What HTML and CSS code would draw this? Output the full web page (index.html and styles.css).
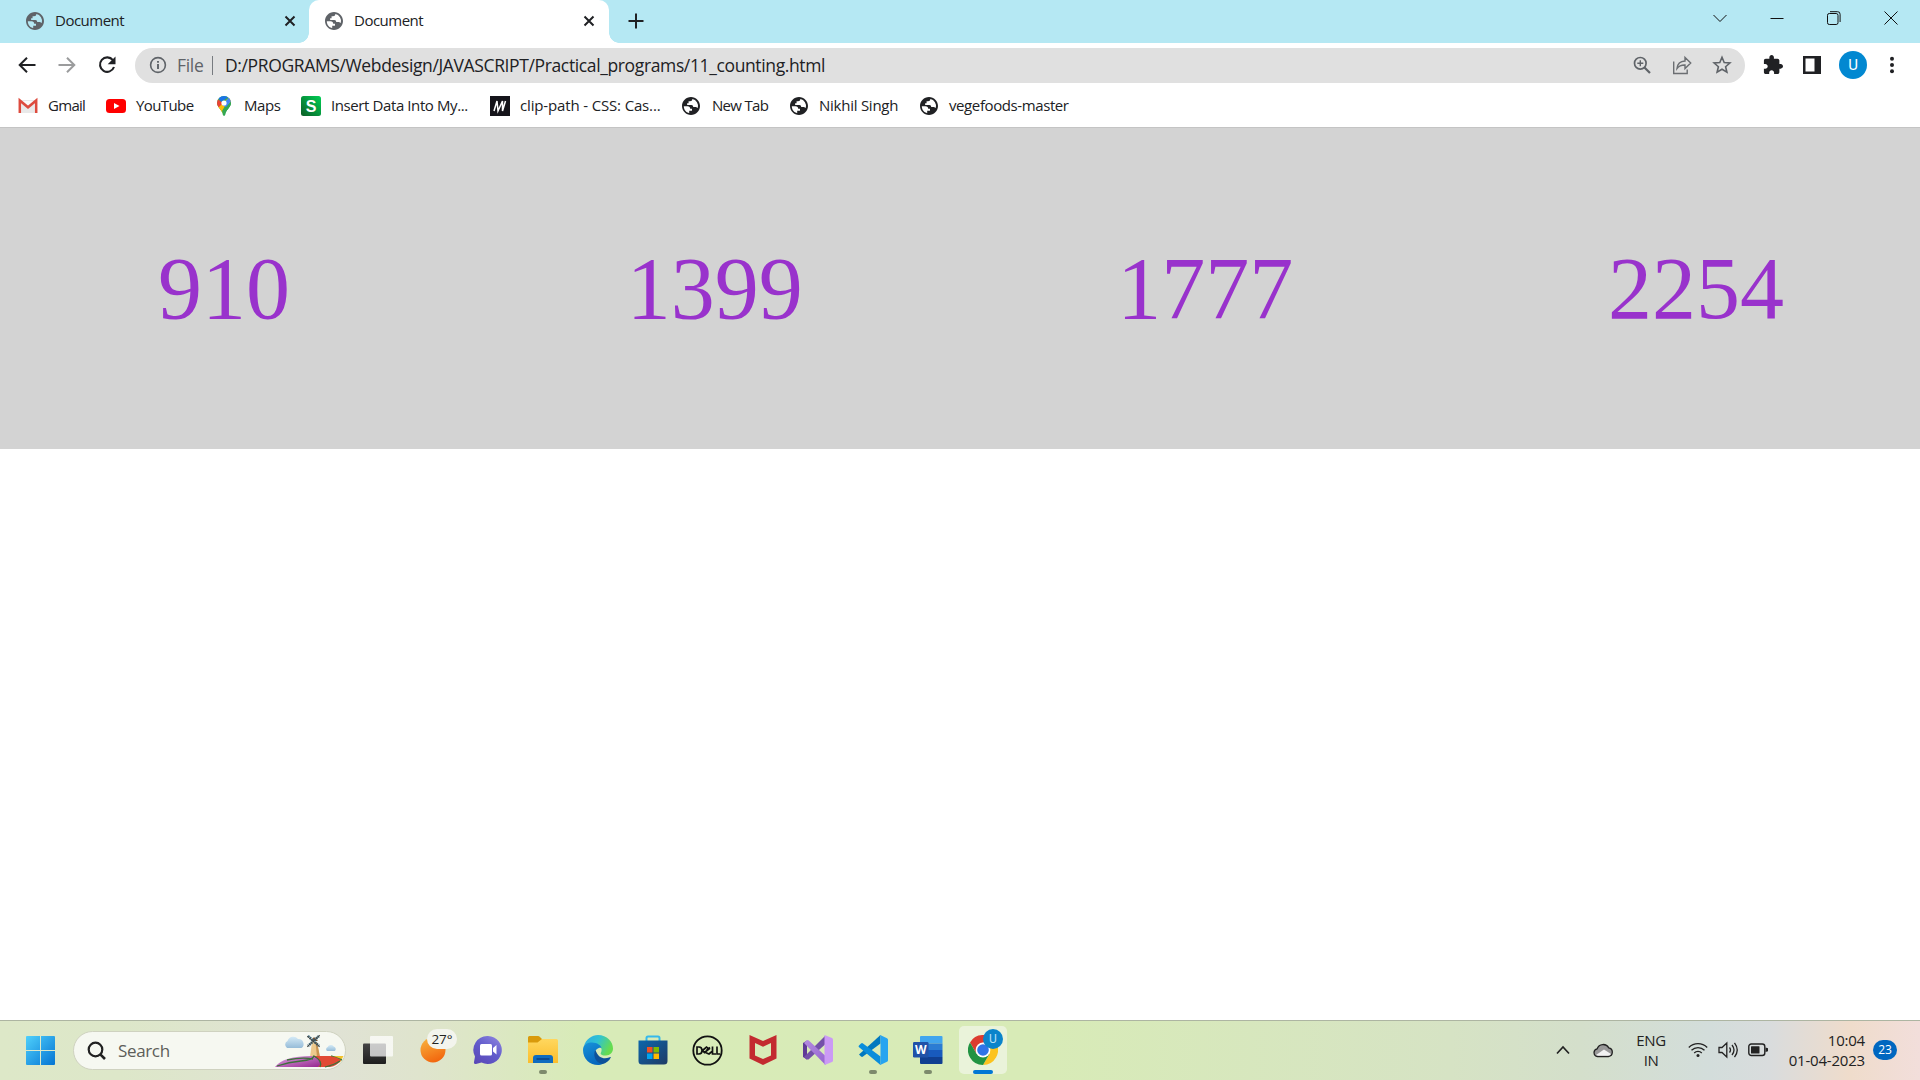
FILE: index.html
```html
<!DOCTYPE html>
<html lang="en">
<head>
<meta charset="utf-8">
<title>Document</title>
<link rel="stylesheet" href="styles.css">
</head>
<body>
<svg width="0" height="0" class="defs" aria-hidden="true">
  <defs>
    <symbol id="globe" viewBox="2 2 20 20"><path d="M12 2C6.48 2 2 6.48 2 12s4.48 10 10 10 10-4.48 10-10S17.52 2 12 2zM4 12.2h4.2c1.9 0 2.9 1 2.9 2.9h2v2.1h-3.1v2.6C6.700 19.300 4.100 16.200 4 12.200zM13.500 4.200c-.1 1.700-.9 2.500-2.600 2.500H9.300v2.200H7.700v2h4.700c1.300 0 2 .8 2 2.100h2.200c1.300 0 1.800.8 3 .9A8 8 0 0 0 13.500 4.200z" fill-rule="evenodd"/></symbol>
    <symbol id="x" viewBox="0 0 12 12"><path d="M1.500 1.500l9 9M10.500 1.500l-9 9" stroke="#202124" stroke-width="2"/></symbol>
    <linearGradient id="win" x1="0" y1="0" x2="1" y2="1"><stop offset="0" stop-color="#4fd0fb"/><stop offset="1" stop-color="#0474d3"/></linearGradient>
    <linearGradient id="sun" x1=".2" y1="0" x2=".6" y2="1"><stop offset="0" stop-color="#f8b13c"/><stop offset="1" stop-color="#f2650d"/></linearGradient>
    <linearGradient id="chat" x1=".9" y1="0" x2=".2" y2="1"><stop offset="0" stop-color="#8f86df"/><stop offset=".5" stop-color="#625ccc"/><stop offset="1" stop-color="#5a48b8"/></linearGradient>
    <linearGradient id="fold" x1="0" y1="0" x2="0" y2="1"><stop offset="0" stop-color="#ffd75e"/><stop offset="1" stop-color="#fbbd2c"/></linearGradient>
    <linearGradient id="edge1" x1="0" y1="0" x2="1" y2=".4"><stop offset="0" stop-color="#2aa9e6"/><stop offset=".5" stop-color="#2fc2d3"/><stop offset="1" stop-color="#66dc4f"/></linearGradient>
    <linearGradient id="edge2" x1="0" y1="0" x2=".4" y2="1"><stop offset="0" stop-color="#1793da"/><stop offset="1" stop-color="#0667bd"/></linearGradient>
    <linearGradient id="store" x1="0" y1="0" x2="1" y2="1"><stop offset="0" stop-color="#0d66ab"/><stop offset="1" stop-color="#1f3b66"/></linearGradient>
    <linearGradient id="vs" x1="0" y1="0" x2="1" y2="1"><stop offset="0" stop-color="#b48be0"/><stop offset="1" stop-color="#9565cf"/></linearGradient>
    <linearGradient id="tv" x1="0" y1="0" x2="0" y2="1"><stop offset="0" stop-color="#444"/><stop offset="1" stop-color="#1e1e1e"/></linearGradient>
    <linearGradient id="purple" x1="0" y1="0" x2="1" y2="1"><stop offset="0" stop-color="#dca5e4"/><stop offset="1" stop-color="#96258e"/></linearGradient>
    <linearGradient id="sg" x1="1" y1="0" x2="0" y2="1"><stop offset="0" stop-color="#00cf55"/><stop offset="1" stop-color="#0b5c25"/></linearGradient>
    <linearGradient id="cloudg" x1="0" y1="0" x2="0" y2="1"><stop offset="0" stop-color="#d4eaf6"/><stop offset="1" stop-color="#96bcd8"/></linearGradient>
  </defs>
</svg>

<div class="window">
  <header class="tabstrip">
    <div class="tab">
      <svg class="favicon" width="18" height="18"><use href="#globe"/></svg>
      <span class="tab-title">Document</span>
      <svg class="close" width="12" height="12"><use href="#x"/></svg>
    </div>
    <div class="tab active">
      <svg class="favicon" width="18" height="18"><use href="#globe"/></svg>
      <span class="tab-title">Document</span>
      <svg class="close" width="12" height="12"><use href="#x"/></svg>
    </div>
    <svg class="newtab" width="16" height="16" viewBox="0 0 16 16"><path d="M8 .5v15M.5 8h15" stroke="#202124" stroke-width="2"/></svg>
    <div class="captions">
      <svg width="14" height="14" viewBox="0 0 14 14"><path d="M.5 4L7 10.500 13.500 4"/></svg>
      <svg width="14" height="14" viewBox="0 0 14 14"><path d="M.5 7.500h13"/></svg>
      <svg width="14" height="14" viewBox="0 0 14 14"><rect x=".5" y="2.500" width="10.500" height="11" rx="1.800"/><path d="M3 .7h7.500a2.500 2.500 0 0 1 2.600 2.600V11"/></svg>
      <svg width="14" height="14" viewBox="0 0 14 14"><path d="M.5.5l13 13M13.500.5l-13 13"/></svg>
    </div>
  </header>

  <div class="toolbar">
    <div class="nav">
      <svg width="20" height="20" viewBox="0 0 20 20"><path d="M18.500 10H3M10 2.700L2.700 10l7.300 7.300" fill="none" stroke="#202124" stroke-width="2"/></svg>
      <svg width="20" height="20" viewBox="0 0 20 20"><path d="M1.500 10H17M10 2.700l7.300 7.300-7.300 7.300" fill="none" stroke="#9b9c9d" stroke-width="2"/></svg>
      <svg width="20" height="20" viewBox="0 0 20 20"><path d="M15.900 5.200A7.200 7.200 0 1 0 17 12" fill="none" stroke="#202124" stroke-width="2.100"/><path d="M18.500 1.500v7.800h-7.800z" fill="#202124"/></svg>
    </div>
    <div class="omnibox">
      <svg class="info" width="18" height="18" viewBox="0 0 18 18"><circle cx="9" cy="9" r="7.400" fill="none" stroke="#5f6368" stroke-width="1.600"/><path d="M9 8v5M9 4.900v1.900" stroke="#5f6368" stroke-width="1.900"/></svg>
      <span class="scheme">File</span>
      <span class="divider"></span>
      <span class="url">D:/PROGRAMS/Webdesign/JAVASCRIPT/Practical_programs/11_counting.html</span>
      <div class="omni-actions">
        <svg width="20" height="20" viewBox="0 0 20 20" fill="none" stroke="#5f6368" stroke-width="1.700"><circle cx="8.300" cy="8.300" r="5.800"/><path d="M12.500 12.500l5.500 5.500" stroke-width="2.200"/><path d="M8.300 5.300v6M5.300 8.300h6" stroke-width="1.400"/></svg>
        <svg width="20" height="20" viewBox="0 0 20 20" fill="none" stroke="#6b6e72" stroke-width="1.400"><path d="M1.700 6.500v12h13.500v-4"/><path d="M5 13.500c.5-5 3.500-7.300 8-7.500V2.500l5.700 5.500L13 13.500V10c-3.500-.1-6 .8-8 3.500z"/></svg>
        <svg width="20" height="20" viewBox="0 0 20 20" fill="none" stroke="#5f6368" stroke-width="1.600"><path d="M10 2.300l2.200 5.200 5.700.5-4.300 3.700 1.300 5.500L10 14.300l-4.900 2.900 1.300-5.500L2.100 8l5.700-.5z"/></svg>
      </div>
    </div>
    <div class="actions">
      <svg width="20" height="20" viewBox="1 1 22 22"><path fill="#202124" d="M20.500 11H19V7c0-1.100-.9-2-2-2h-4V3.500C13 2.120 11.880 1 10.500 1S8 2.120 8 3.500V5H4c-1.100 0-1.990.9-1.990 2v3.800H3.500c1.490 0 2.700 1.210 2.700 2.700s-1.210 2.700-2.700 2.700H2V20c0 1.100.9 2 2 2h3.800v-1.500c0-1.490 1.210-2.700 2.700-2.700 1.490 0 2.700 1.210 2.700 2.700V22H17c1.100 0 2-.9 2-2v-4h1.500c1.380 0 2.500-1.120 2.500-2.500S21.880 11 20.500 11z"/></svg>
      <svg width="18" height="18" viewBox="0 0 18 18"><path fill="#202124" fill-rule="evenodd" d="M0 0h18v18H0zM2.500 2.500v13h9v-13z"/></svg>
      <span class="avatar">U</span>
      <svg width="6" height="18" viewBox="0 0 6 18" fill="#202124"><circle cx="3" cy="2.800" r="2"/><circle cx="3" cy="9" r="2"/><circle cx="3" cy="15.200" r="2"/></svg>
    </div>
  </div>

  <nav class="bookmarks">
    <a class="bm gmail"><svg width="20" height="20" viewBox="0 0 20 20"><path fill="#e9e9e9" d="M1 4h18v13H1z"/><path fill="#fafafa" d="M4 5h12l-6 6z"/><path fill="none" stroke="#dd4b3e" stroke-width="2.500" d="M1.800 17V4.500L10 11.300l8.200-6.800V17"/></svg><span>Gmail</span></a>
    <a class="bm youtube"><svg width="20" height="20" viewBox="0 0 20 20"><rect y="3" width="20" height="14" rx="3.500" fill="#f00"/><path fill="#fff" d="M8 7l5.500 3L8 13z"/></svg><span>YouTube</span></a>
    <a class="bm maps"><svg width="20" height="20" viewBox="0 0 20 20"><clipPath id="pin"><path d="M10 0a7 7 0 0 0-7 7c0 4.600 5.300 6.500 5.900 12 .1 1 2.100 1 2.200 0C11.700 13.500 17 11.600 17 7a7 7 0 0 0-7-7z"/></clipPath><g clip-path="url(#pin)"><path fill="#34a853" d="M0 0h20v20H0z"/><path fill="#fbbc04" d="M0 14L17 0v6L8 17z"/><path fill="#34a853" d="M11 10l7-5v8l-8 7-2-5z"/><path fill="#4285f4" d="M8 9L18 -2v6L12 11z"/><path fill="#1a73e8" d="M3 0h13L7 6z"/><path fill="#ea4335" d="M2 2l7 5-5 5H0z"/></g><circle cx="10" cy="7" r="2.600" fill="#fff"/></svg><span>Maps</span></a>
    <a class="bm insert"><svg width="20" height="20" viewBox="0 0 20 20"><rect width="20" height="20" rx="2.500" fill="url(#sg)"/><text x="10" y="15.800" text-anchor="middle" class="s-letter">S</text></svg><span>Insert Data Into My...</span></a>
    <a class="bm clip"><svg width="20" height="20" viewBox="0 0 20 20"><path fill="#15141a" d="M0 0h20v20H0z"/><path d="M4 15L7 5l1 10 4.500-10v10L15.500 5" fill="none" stroke="#fff" stroke-width="1.500"/></svg><span>clip-path - CSS: Cas...</span></a>
    <a class="bm newt"><svg width="18" height="18"><use href="#globe"/></svg><span>New Tab</span></a>
    <a class="bm nikhil"><svg width="18" height="18"><use href="#globe"/></svg><span>Nikhil Singh</span></a>
    <a class="bm vege"><svg width="18" height="18"><use href="#globe"/></svg><span>vegefoods-master</span></a>
  </nav>

  <main class="page">
    <section class="counters">
      <div class="count">910</div>
      <div class="count">1399</div>
      <div class="count">1777</div>
      <div class="count">2254</div>
    </section>
  </main>

  <footer class="taskbar">
    <svg class="start" width="29" height="29" viewBox="0 0 29 29"><path fill="url(#win)" d="M0 1a1 1 0 0 1 1-1h13v14H0zM15 0h13a1 1 0 0 1 1 1v13H15zM0 15h14v14H1a1 1 0 0 1-1-1zM15 15h14v13a1 1 0 0 1-1 1H15z"/></svg>
    <div class="search">
      <svg width="20" height="20" viewBox="0 0 20 20"><circle cx="8.500" cy="8.500" r="6.800" fill="none" stroke="#222" stroke-width="2.200"/><path d="M13.300 13.300l4.700 4.700" stroke="#222" stroke-width="2.600"/></svg>
      <span>Search</span>
      <svg class="mill" width="72" height="36" viewBox="0 0 72 36">
        <path fill="url(#cloudg)" d="M12 15a4 4 0 0 1 .5-7 6 6 0 0 1 10.500-2 5 5 0 0 1 3.500 9z"/>
        <path fill="url(#cloudg)" d="M52 18a2.300 2.300 0 0 1 .7-4 3.500 3.500 0 0 1 6-.5 2.500 2.500 0 0 1 1 4.500z"/>
        <path fill="#edc98d" d="M37 9h5l3 15H35z"/><path fill="#c99450" d="M40.500 9H42l3 15h-3z"/><path fill="#7b4a25" d="M36 8l3-4 4 4z"/>
        <path stroke="#3c6478" stroke-width="2.600" stroke-dasharray="1.700 .6" d="M33 3l11 10M44 3L33 13"/><path stroke="#483b30" stroke-width=".8" d="M32 3l13 11M45 2L32 14"/>
        <path fill="#f3c22c" d="M50 23h18.500l-3.500 6.500L50 27z"/>
        <path stroke="#398238" stroke-width="1.500" d="M56 23l11 4"/>
        <path fill="#e14a34" d="M38 34l2-11h15q7 1 11 4-4 6-11 7z"/>
        <path fill="url(#purple)" d="M0 34q8-11 37-11 13 5 6 11z"/>
        <path d="M2 33q12-4 24-5t13-5q9 5 6 11M12 27q15-3 26-1" fill="none" stroke="#3d713b" stroke-width="1.300"/>
        <path d="M50 34q9-2 15-6" fill="none" stroke="#3d713b" stroke-width="1.200"/>
      </svg>
    </div>
    <div class="apps">
      <div class="app"><svg width="30" height="30" viewBox="0 0 30 30"><rect y="8.500" width="23" height="20.500" rx="1" fill="url(#tv)"/><rect x="7" y="1" width="23" height="20.500" rx="1" fill="#fff" fill-opacity=".72"/></svg></div>
      <div class="app weather"><svg width="26" height="26" viewBox="0 0 26 26"><circle cx="13" cy="13" r="12.500" fill="url(#sun)"/></svg><span class="temp">27°</span></div>
      <div class="app"><svg width="30" height="30" viewBox="0 0 30 30"><path fill="url(#chat)" d="M15 1a14 14 0 1 1-6.500 26.500L3 29c-1.500.3-2.300-.6-2-2l1-5.500A14 14 0 0 1 15 1z"/><rect x="7" y="9" width="12" height="11.500" rx="1.500" fill="#fff"/><path fill="#fff" d="M20 13l3.500-3v9.500L20 16.500z"/></svg></div>
      <div class="app open"><svg width="30" height="30" viewBox="0 0 30 30"><path fill="#d99a0b" d="M0 2.500A1.500 1.500 0 0 1 1.500 1h8.600q1 0 1.600.7L14 4v5H0z"/><path fill="url(#fold)" d="M0 7.500h9.500L14 4h14.500A1.500 1.500 0 0 1 30 5.500V28H0z"/><path fill="#0f6cbf" d="M5 28v-5a3 3 0 0 1 3-3h14a3 3 0 0 1 3 3v5z"/><path stroke="#0a4184" stroke-width="1.500" d="M8.500 24h13"/></svg></div>
      <div class="app"><svg width="30" height="30" viewBox="0 0 30 30"><path fill="url(#edge1)" d="M1 11C3 4 9 0 15 0c9 0 15 6.500 15 13.500 0 4-3 7-7 7-3.500 0-6-1.200-5.200-2.600 1.200-2 1.200-4.700-.8-6.700C13 7.500 5 7 1 11z"/><path fill="url(#edge2)" d="M0 15C0 9 5 7.500 9 7.500c5 0 9.500 3 9.500 6 0-2-7.500-.5-6.500 6 .6 5 4 8 9 8.500C18 30 16.500 30 15 30 7 30 0 24 0 15z"/><path fill="#0d519a" d="M12.500 15c-3 4-.5 13 7 14 3.500-.8 6.500-3 8.300-6.500-.3-.7-1-.3-1.800 0-5 2-11 .5-13.500-7.500z"/></svg></div>
      <div class="app"><svg width="30" height="30" viewBox="0 0 30 30"><path d="M8.500 6V3q0-1.500 1.500-1.500h10q1.500 0 1.500 1.500v3" fill="none" stroke="#35b9ec" stroke-width="2"/><path fill="url(#store)" d="M.5 5.500h29V26a3.500 3.500 0 0 1-3.500 3.500H4A3.500 3.500 0 0 1 .5 26z"/><path fill="#f25022" d="M9 12h5.500v5.500H9z"/><path fill="#7fba00" d="M15.500 12H21v5.500h-5.500z"/><path fill="#00a4ef" d="M9 18.500h5.500V24H9z"/><path fill="#ffb900" d="M15.500 18.500H21V24h-5.500z"/></svg></div>
      <div class="app"><svg width="31" height="31" viewBox="0 0 31 31"><circle cx="15.500" cy="15.500" r="14.200" fill="none" stroke="#111" stroke-width="1.800"/><path d="M5 12v7h2q3 0 3-3.500T7 12zM20.500 11.500v7.500h3.500M25 11.500v7.500h3M10.500 15.500l4-3.500 2.500 2-4.500 3.500zM13.500 17.500l3.500 1.500 3-2.500M14.500 15.500l3.500-3" fill="none" stroke="#111" stroke-width="1.700"/></svg></div>
      <div class="app"><svg width="30" height="30" viewBox="0 0 30 30"><path fill="#c32a30" fill-rule="evenodd" d="M1.500 0L15 6 28.500 0v23.500L15 30 1.500 23.500zM7 8v12.500L15 24l8-3.500V8l-8 3.700z"/></svg></div>
      <div class="app"><svg width="30" height="30" viewBox="0 0 30 30"><path fill="#5f3a96" d="M0 8l4-2.500v19L0 22z"/><path fill="#7450a9" d="M1 22L22 1v8.500L5.500 24.500h-2z"/><path fill="url(#vs)" d="M1 8l2.500-2.500q1-.8 2.300 0L22.500 21v9z"/><path fill="#cb9af5" d="M21.500 0L29 3q1 .5 1 1.500v21q0 1-1 1.500l-7.500 3z"/></svg></div>
      <div class="app open"><svg width="30" height="30" viewBox="0 0 30 30"><path fill="#0078bf" d="M1 19.500l2 2q1 .8 2 .1L22.500 8.500V0z"/><path fill="#0a8ddb" d="M1 10.500l2-2q1-.8 2-.1l17.500 13V30L.8 12q-.6-.8.2-1.500z"/><path fill="#27a4f0" d="M21 .5q.7-.7 1.700-.3L29 3.300q1 .5 1 1.500v20.400q0 1-1 1.500l-6.300 3.100q-1 .4-1.700-.3 1.500 1 1.500-1V1.500q0-2-1.500-1z"/></svg></div>
      <div class="app open"><svg width="30" height="30" viewBox="0 0 30 30"><path fill="#41a5ee" d="M8 1h20.500q1 0 1 1v6.500H7V2q0-1 1-1z"/><path fill="#2b7cd3" d="M7 8.500h22.500V15H7z"/><path fill="#185abd" d="M7 15h22.500v7H7z"/><path fill="#103f91" d="M7 22h22.500v6q0 1-1 1H8q-1 0-1-1z"/><rect y="7" width="15.500" height="15.500" rx="1.200" fill="#2052a8"/><text x="7.700" y="18.800" text-anchor="middle" class="w-letter">W</text></svg></div>
      <div class="app current"><svg width="30" height="30" viewBox="0 0 30 30"><path fill="#dc3c30" d="M2 7.500A15 15 0 0 1 28 7.500H15L8.500 18.700z"/><path fill="#fcc31e" d="M28 7.500A15 15 0 0 1 15 30l6.500-11.200V7.500z"/><path fill="#229342" d="M2 7.500A15 15 0 0 0 15 30l6.500-11.200h-13z"/><circle cx="15" cy="15" r="7.400" fill="#fff"/><circle cx="15" cy="15" r="5.800" fill="#2f73e8"/></svg><span class="badge">U</span></div>
    </div>
    <div class="tray">
      <svg class="up" width="14" height="10" viewBox="0 0 14 10"><path d="M1 8.500l6-6.500 6 6.500" fill="none" stroke="#222" stroke-width="1.700"/></svg>
      <svg class="cloud" width="20" height="16" viewBox="0 0 20 16"><path fill="#999" stroke="#222" stroke-width="1.300" d="M4.500 14.500a3.900 3.900 0 0 1-.3-7.700A6.300 6.300 0 0 1 15.700 5.800a4.400 4.400 0 0 1-.3 8.700z"/><path fill="#f2f2f2" d="M3 13l8-5.500 7 4.500q-1 1.800-3 1.800H5z"/></svg>
      <div class="lang"><span>ENG</span><span>IN</span></div>
      <div class="status">
        <svg width="20" height="16" viewBox="0 0 20 16" fill="none" stroke="#222" stroke-width="1.300"><path d="M.8 5.500a13 13 0 0 1 18.400 0M3.500 8.300a9.200 9.200 0 0 1 13 0M6.200 11a5.400 5.400 0 0 1 7.600 0"/><circle cx="10" cy="13.500" r="1.500" fill="#222" stroke="none"/></svg>
        <svg width="20" height="18" viewBox="0 0 20 18" fill="none" stroke="#222" stroke-width="1.300"><path d="M1 6.500h3L8.800 2v14L4 11.500H1zM11.500 6.500q2 2.500 0 5M14 4q4 5 0 10M16.500 1.800q5.500 7.200 0 14.400"/></svg>
        <svg width="20" height="14" viewBox="0 0 20 14"><rect x=".8" y="1" width="16" height="11.500" rx="2.500" fill="none" stroke="#222" stroke-width="1.400"/><rect x="3" y="3.200" width="8.500" height="7.200" rx=".5" fill="#222"/><path fill="#222" d="M17.500 4.500l2.500.8v3l-2.500.8z"/></svg>
      </div>
      <div class="clock"><span class="time">10:04</span><span class="date">01-04-2023</span></div>
      <span class="notif">23</span>
    </div>
  </footer>
</div>
</body>
</html>
```
FILE: styles.css
```css
* { box-sizing: border-box; }
body { margin: 0; background: #fff; color: #202124; font-family: "Open Sans", "Noto Sans", sans-serif; }
svg { display: block; flex: none; }
.defs { position: absolute; }
.window { width: 1920px; height: 1080px; display: flex; flex-direction: column; overflow: hidden; }

.tabstrip { height: 43px; flex: none; background: #b5e8f3; display: flex; align-items: center; }
.tab { position: relative; width: 300px; height: 43px; display: flex; align-items: center; padding: 0 14px 1px 16px; }
.tab:first-child { width: 309px; padding: 0 13px 1px 26px; }
.tab.active { background: #fff; border-radius: 10px 10px 0 0; }
.tab.active::before, .tab.active::after { content: ""; position: absolute; bottom: 0; width: 10px; height: 10px; }
.tab.active::before { left: -10px; background: radial-gradient(circle at 0 0, transparent 9.500px, #fff 10px); }
.tab.active::after { right: -10px; background: radial-gradient(circle at 100% 0, transparent 9.500px, #fff 10px); }
.favicon { fill: #5f6368; margin-right: 11px; }
.tab-title { font-size: 15px; flex: 1; letter-spacing: -0.500px; padding-bottom: 2px; }
.newtab { margin-left: 19px; margin-bottom: 1px; }
.captions { margin-left: auto; margin-right: 22px; padding-bottom: 7px; display: flex; gap: 43px; fill: none; stroke: #111; stroke-width: 1; }

.toolbar { height: 44px; flex: none; display: flex; align-items: center; }
.nav { width: 135px; padding-left: 17px; display: flex; gap: 20px; }
.omnibox { width: 1610px; height: 35px; border-radius: 18px; background: #e0e0e0; display: flex; align-items: center; padding: 0 13px 0 14px; font-size: 17.500px; }
.scheme { width: 35px; margin-left: 10px; color: #5f6368; letter-spacing: -0.300px; }
.divider { width: 1px; height: 19px; background: #777b80; }
.url { margin-left: 12px; letter-spacing: -0.370px; white-space: nowrap; }
.omni-actions { margin-left: auto; display: flex; gap: 20px; }
.actions { display: flex; align-items: center; margin-left: 18px; }
.actions svg:nth-child(2) { margin-left: 20px; }
.avatar { width: 28px; height: 28px; margin: 0 22px 0 18px; border-radius: 50%; background: #0288d1; color: #fff; font: 15px/28px Roboto, sans-serif; text-align: center; }

.bookmarks { height: 41px; flex: none; padding: 0 0 2px 18px; border-bottom: 1px solid #c4c4c4; display: flex; align-items: center; font-size: 15px; }
.bm { display: flex; align-items: center; gap: 10px; white-space: nowrap; fill: #202124; letter-spacing: -0.400px; }
.bm span { padding-bottom: 2px; }
.gmail { width: 88px; letter-spacing: -0.700px; }
.youtube { width: 108px; letter-spacing: -0.600px; }
.maps { width: 87px; }
.insert { width: 189px; }
.clip { width: 192px; letter-spacing: -0.150px; }
.newt { width: 108px; gap: 12px; letter-spacing: -0.700px; }
.nikhil { width: 130px; gap: 11px; letter-spacing: -0.250px; }
.vege { gap: 11px; }
.s-letter { font: bold 16px "Liberation Sans", sans-serif; fill: #fff; letter-spacing: 0; }
.w-letter { font: bold 12px "Open Sans", sans-serif; fill: #fff; }

.page { flex: 1; }
.counters { height: 321px; background: #d3d3d3; display: flex; align-items: center; justify-content: space-between; padding: 0 136px 1px; }
.count { width: 176px; text-align: center; font: 88px "Liberation Serif", serif; color: #9932cc; }

.taskbar { height: 60px; flex: none; border-top: 1px solid #adb5a2; display: flex; align-items: center; background: linear-gradient(90deg, #dde8c8 0, #dde7c9 120px, #e0e2d5 330px, #dfe4cd 420px, #d8ebb8 580px, #d8ebb7 1050px, #d6e3c4 1450px, #d4dfcb 1580px, #d3dddb 1710px, #d9dcdd 1770px, #efdccb 1850px, #f2dedb 1920px); }
.start { margin-left: 26px; }
.search { width: 273px; height: 39px; margin-left: 18px; padding-left: 13px; border: 1px solid #cfd2c0; border-radius: 20px; background: #f6f8f1; display: flex; align-items: center; font-size: 17px; color: #5d5e59; overflow: hidden; }
.search span { margin-left: 11px; letter-spacing: -0.350px; }
.mill { margin: 0 -2px 0 auto; }
.apps { margin-left: 4px; display: flex; }
.app { position: relative; width: 55px; height: 59px; padding-bottom: 1px; display: flex; align-items: center; justify-content: center; }
.app.open::after, .app.current::after { content: ""; position: absolute; bottom: 6px; left: 23.500px; width: 8px; height: 4px; border-radius: 2px; background: #7d8a6c; }
.app.current::after { left: 17.500px; width: 20px; background: #0078d4; }
.app.current::before { content: ""; position: absolute; inset: 5px 3px 6px 4px; border-radius: 5px; background: #eaf3da; }
.app.current svg { position: relative; }
.temp { position: absolute; left: 22px; top: 8px; width: 30px; height: 20px; border-radius: 10px; background: #f3f4ed; color: #222; font-size: 13.500px; line-height: 20px; text-align: center; }
.badge { position: absolute; left: 28px; top: 8px; width: 20px; height: 20px; border-radius: 50%; background: #0b84cb; color: #b8e0f7; font: 12px/20px Roboto, sans-serif; text-align: center; }
.tray { margin-left: auto; display: flex; align-items: center; padding: 0 23px 1px 0; font-size: 15px; line-height: 20px; color: #222; }
.up { margin-right: 23px; }
.lang { width: 40px; margin: 0 17px 0 18px; display: flex; flex-direction: column; align-items: center; letter-spacing: -0.400px; }
.status { display: flex; align-items: center; gap: 10px; }
.clock { width: 97px; padding-bottom: 1px; display: flex; flex-direction: column; align-items: flex-end; letter-spacing: -0.200px; white-space: nowrap; }
.notif { width: 24px; height: 20px; margin-left: 8px; border-radius: 10px; background: #0067c0; color: #fff; font-size: 12px; text-align: center; }
```
